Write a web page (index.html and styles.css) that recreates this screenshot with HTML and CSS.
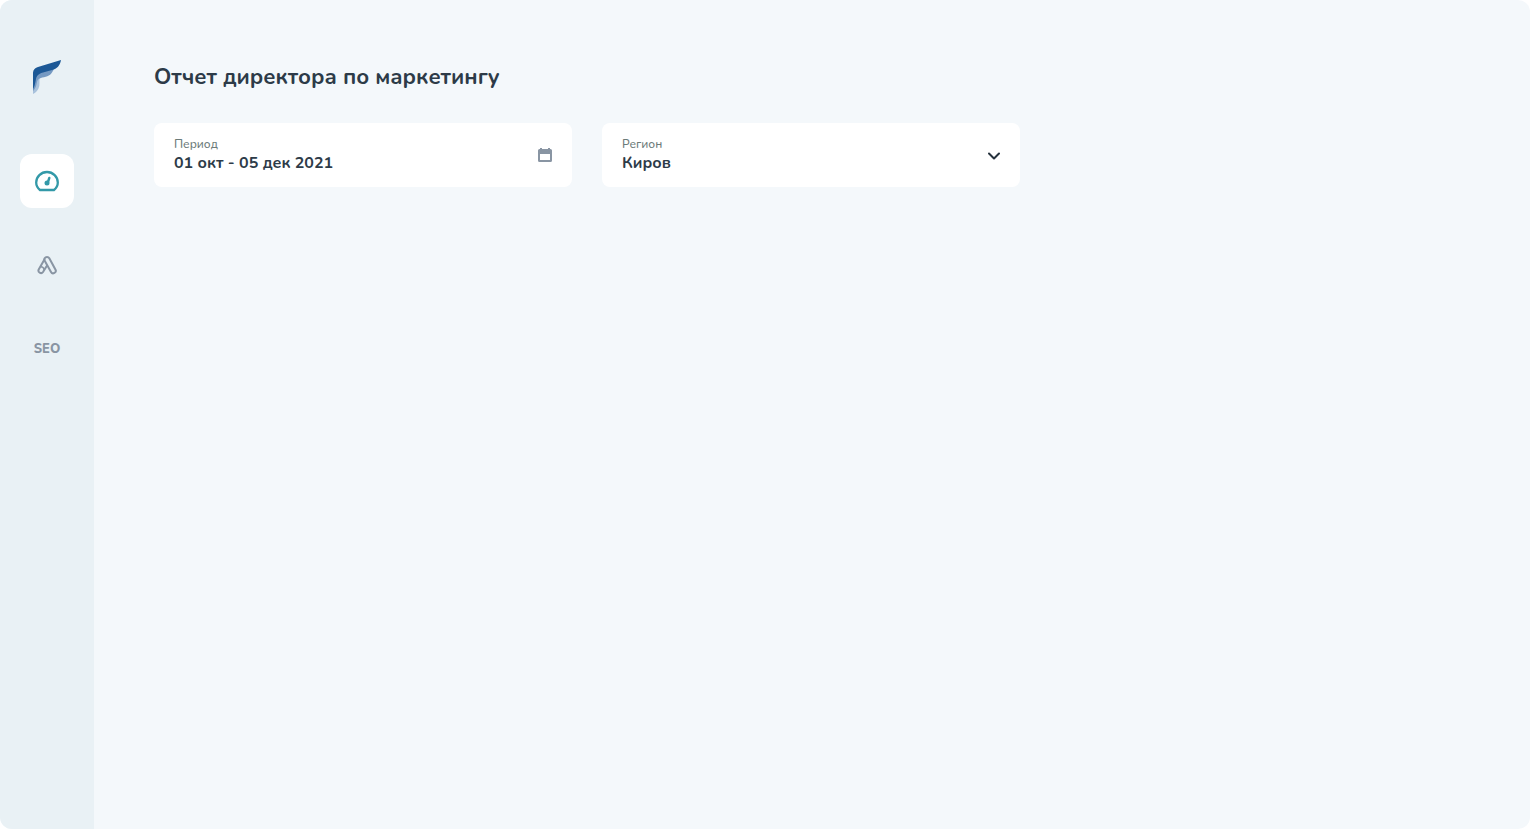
FILE: index.html
```html
<!DOCTYPE html>
<html lang="ru">
<head>
<meta charset="utf-8">
<meta name="viewport" content="width=device-width, initial-scale=1">
<title>Отчет директора по маркетингу</title>
<link rel="stylesheet" href="styles.css">
</head>
<body>
<div class="app">
  <aside class="sidebar">
    <a class="logo" href="#" aria-label="На главную">
      <svg width="28" height="34" viewBox="0 0 28 34">
        <path fill="#a9c2dc" d="M0 34V18L7 16.500C6 19 6.800 22 6.300 26C5.500 30 3 32.500 0 34Z"/>
        <path fill="#7599c2" d="M0 31V15L6 10L21 8.500C19 14 16 16.500 11 17.200C6 18 4.500 19 3.800 23C3 27 2 29 0 31Z"/>
        <path fill="#1c5896" d="M0 29V14C0 10 1.500 8.200 5 7L28 0C27 5.500 24 9 19 10L10 12.500C5 14 3.500 16 2.800 20C2 24 1.500 27 0 29Z"/>
      </svg>
    </a>
    <nav class="nav">
      <a class="nav-item nav-item-active" href="#" aria-label="Отчет" aria-current="page">
        <svg width="24" height="22" viewBox="0 0 24 22" fill="none">
          <path d="M5 20C2.500 18 1.200 15.500 1.200 12.500A10.800 10.500 0 0 1 22.800 12.500C22.800 15.500 21.500 18 19 20Z" stroke="#3399a8" stroke-width="2.300" stroke-linejoin="round"/>
          <path d="M14.300 8L12.800 12.500" stroke="#3399a8" stroke-width="2.400" stroke-linecap="round"/>
          <circle cx="12" cy="13" r="2.500" fill="#3399a8"/>
        </svg>
      </a>
      <a class="nav-item" href="#" aria-label="Реклама">
        <svg width="20" height="20" viewBox="0 0 20 20" fill="none" stroke="#8995a3" stroke-width="2" stroke-linejoin="round">
          <path d="M7.700 3.300A2.600 2.600 0 0 1 12.300 3.300L18.400 14.500A2.500 2.500 0 0 1 14 17L7.700 5.800A2.600 2.600 0 0 1 7.700 3.300Z"/>
          <path d="M7.700 4L1.700 14.500A2.500 2.500 0 0 0 6 17L10.200 10.200"/>
          <path d="M3.600 11.800Q6.500 11.600 7.200 14.800" stroke-width="1.600"/>
        </svg>
      </a>
      <a class="nav-item" href="#">SEO</a>
    </nav>
  </aside>
  <main class="content">
    <h1 class="title">Отчет директора по маркетингу</h1>
    <form class="filters">
      <div class="field">
        <div class="field-body">
          <label class="field-label" for="period">Период</label>
          <input class="field-control" id="period" type="text" value="01 окт - 05 дек 2021">
        </div>
        <svg class="field-icon" width="14" height="14" viewBox="0 0 14 14">
          <path fill="#8995a3" fill-rule="evenodd" d="M2 0H4V1H10V0H12V1H12.500Q14 1 14 2.500V12.500Q14 14 12.500 14H1.500Q0 14 0 12.500V2.500Q0 1 1.500 1H2ZM2 6V12H12V6Z"/>
        </svg>
      </div>
      <div class="field">
        <div class="field-body">
          <label class="field-label" for="region">Регион</label>
          <select class="field-control" id="region">
            <option>Киров</option>
          </select>
        </div>
        <svg class="field-icon" width="12" height="10" viewBox="0 0 12 10" fill="none">
          <path d="M1 3.500L6 8.500L11 3.500" stroke="#26323d" stroke-width="2" stroke-linecap="round" stroke-linejoin="round"/>
        </svg>
      </div>
    </form>
  </main>
</div>
</body>
</html>
```
FILE: styles.css
```css
* {
  box-sizing: border-box;
}

body {
  margin: 0;
  background: #fff;
  color: #2d3b48;
  font-family: Nunito, "Noto Sans", sans-serif;
}

.app {
  display: flex;
  min-height: 100vh;
  overflow: hidden;
  border-radius: 12px;
  background: #f4f8fb;
}

.sidebar {
  display: flex;
  flex: none;
  flex-direction: column;
  align-items: center;
  gap: 60px;
  padding: 60px 20px;
  background: #e9f1f5;
}

.logo,
.logo svg,
.nav-item svg {
  display: block;
}

.nav {
  display: flex;
  flex-direction: column;
  gap: 30px;
}

.nav-item {
  display: flex;
  align-items: center;
  justify-content: center;
  width: 54px;
  height: 54px;
  border-radius: 12px;
  color: #8995a3;
  font-size: 13px;
  font-weight: 800;
  text-decoration: none;
}

.nav-item-active {
  background: #fff;
}

.content {
  flex: 1;
  min-width: 0;
  padding: 60px;
}

.title {
  margin: 0 0 28px;
  font-size: 22px;
  font-weight: 700;
  line-height: 35px;
}

.filters {
  display: grid;
  grid-template-columns: repeat(2, minmax(0, 418px));
  gap: 30px;
}

.field {
  display: flex;
  align-items: center;
  gap: 16px;
  min-height: 64px;
  padding: 12px 20px;
  border-radius: 8px;
  background: #fff;
}

.field-body {
  display: flex;
  flex: 1;
  flex-direction: column;
  min-width: 0;
  padding-bottom: 2px;
}

.field-label {
  color: #6c7b7a;
  font-size: 12px;
  font-weight: 500;
  line-height: 18px;
}

.field-control {
  width: 100%;
  height: 20px;
  padding: 0;
  border: 0;
  outline: 0;
  appearance: none;
  background: transparent;
  color: inherit;
  font-family: inherit;
  font-size: 16px;
  font-weight: 700;
  line-height: 20px;
}

.field-icon {
  flex: none;
}
```
